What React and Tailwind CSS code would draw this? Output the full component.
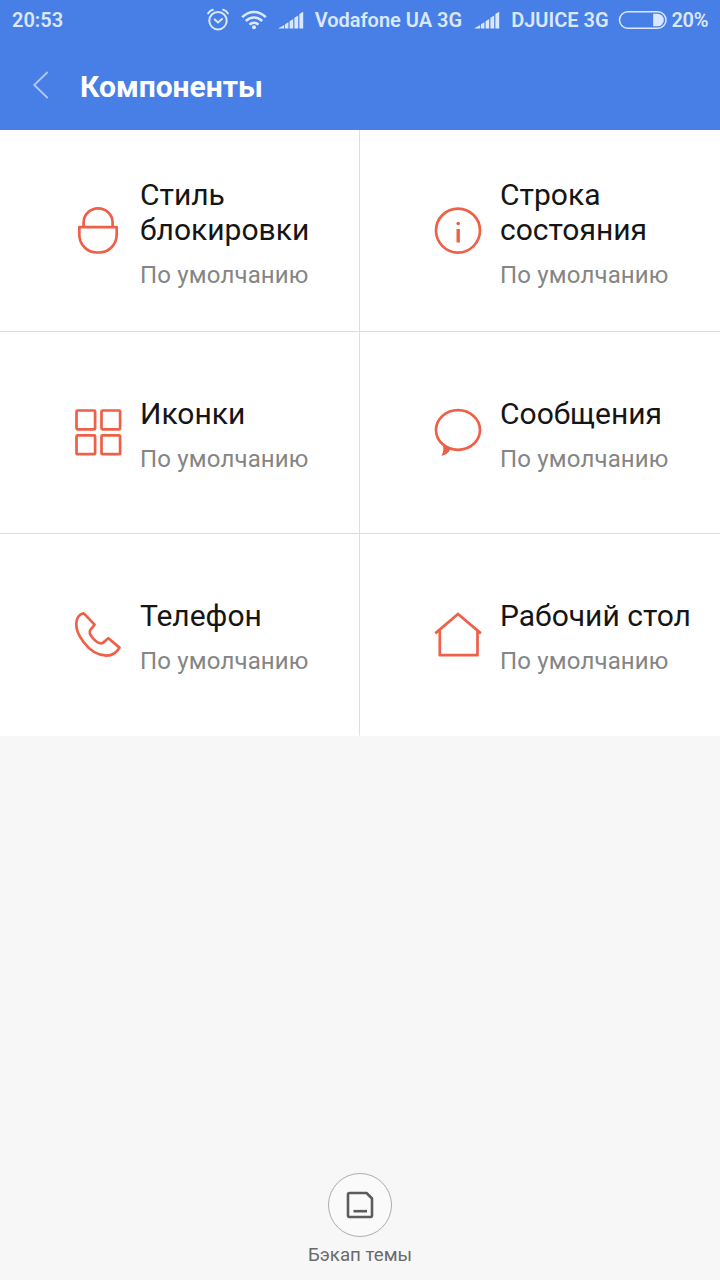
const components = [
  { id: 'lock', title: 'Стиль блокировки', icon: LockIcon },
  { id: 'status', title: 'Строка состояния', icon: InfoIcon },
  { id: 'icons', title: 'Иконки', icon: GridIcon },
  { id: 'messages', title: 'Сообщения', icon: ChatIcon },
  { id: 'phone', title: 'Телефон', icon: PhoneIcon },
  { id: 'desktop', title: 'Рабочий стол', icon: HomeIcon },
]

function IconBase({ children }) {
  return (
    <svg
      viewBox="0 0 60 60"
      className="w-15 h-15 shrink-0 text-[#ee6048]"
      fill="none"
      stroke="currentColor"
      strokeWidth="2.7"
      strokeLinejoin="round"
    >
      {children}
    </svg>
  )
}

function LockIcon() {
  return (
    <IconBase>
      <path d="M15.6 26V21.5a14.5 14.2 0 0 1 29 0V26" />
      <path d="M11.3 26.2H48.7V33.5a17.5 18 0 0 1-17.5 18h-2.4a17.5 18 0 0 1-17.5-18z" />
    </IconBase>
  )
}

function InfoIcon() {
  return (
    <IconBase>
      <circle cx="30" cy="29.6" r="22" />
      <path d="M30.2 28v13.5" strokeWidth="3.4" />
      <circle cx="30.2" cy="22.5" r="1.8" fill="currentColor" stroke="none" />
    </IconBase>
  )
}

function GridIcon() {
  return (
    <IconBase>
      <rect x="8.5" y="7.5" width="18.6" height="18.8" rx="1" />
      <rect x="33.5" y="7.5" width="18.6" height="18.8" rx="1" />
      <rect x="8.5" y="32.4" width="18.6" height="18.8" rx="1" />
      <rect x="33.5" y="32.4" width="18.6" height="18.8" rx="1" />
    </IconBase>
  )
}

function ChatIcon() {
  return (
    <IconBase>
      <ellipse cx="30" cy="27" rx="22" ry="19.8" />
      <path d="M14.3 40.5C16 44.5 15.8 48.5 13.4 52.8C17.5 52.2 20.8 50 22.3 46.2Z" fill="currentColor" stroke="none" />
    </IconBase>
  )
}

function PhoneIcon() {
  return (
    <IconBase>
      <path d="M15.8 8.4L26.6 19.6L22.3 25C20.6 27.5 22.5 30.5 25 33.4C28 36.5 31.5 39.6 34.5 38.1L40.4 33.2L51.5 42.6C49 47 45 50.6 38.5 50.6C30 50.5 21.5 45 15.5 37C10.5 30.5 7.8 24.5 8.3 18.2C8.6 13.8 11 9 15.8 8.4Z" />
    </IconBase>
  )
}

function HomeIcon() {
  return (
    <IconBase>
      <path d="M7.3 28.4L30 9L52.9 28.4" strokeLinejoin="miter" />
      <path d="M11.8 25.5V50.2H49.5V25.5" />
    </IconBase>
  )
}

function AlarmIcon() {
  return (
    <svg viewBox="0 0 22 24" className="w-[22px] h-6" fill="none" stroke="currentColor" strokeWidth="2" strokeLinecap="round">
      <circle cx="11" cy="12.7" r="8.7" />
      <path d="M7.7 11.5L11 14.5L15 11" />
      <path d="M1.2 5.3C2.2 3.5 3.7 2.3 5.8 1.8M20.8 5.3C19.8 3.5 18.3 2.3 16.2 1.8" />
    </svg>
  )
}

function WifiIcon() {
  return (
    <svg viewBox="0 0 26 20" className="w-[26px] h-5" fill="none" stroke="currentColor" strokeWidth="2.5">
      <path d="M1.2 7.2C8 0.2 18 0.2 24.8 7.2" />
      <path d="M4.8 11C9.6 6.2 16.4 6.2 21.2 11" />
      <path d="M8.5 14.6C11 12 15 12 17.5 14.6" />
      <circle cx="13" cy="17.2" r="2" fill="currentColor" stroke="none" />
    </svg>
  )
}

function SignalIcon() {
  return (
    <svg viewBox="0 0 26 18" className="w-[26px] h-[18px]" fill="currentColor">
      <path d="M0 17.5L6.2 14V17.5ZM7 13.2L10.4 11.2V17.5H7ZM11.6 10.2L15.2 8V17.5H11.6ZM16.4 6.8L20.2 4.4V17.5H16.4ZM21.4 3L25.2 0.8V17.5H21.4Z" />
    </svg>
  )
}

function BatteryIcon() {
  return (
    <svg viewBox="0 0 50 20" className="w-[50px] h-5">
      <rect x="1.5" y="1.8" width="46.5" height="16.4" rx="8.2" fill="none" stroke="currentColor" strokeWidth="1.5" />
      <path d="M35.2 3.7H39.5a6.3 6.3 0 0 1 0 12.6H35.2Z" fill="currentColor" />
    </svg>
  )
}

function StatusBar() {
  return (
    <div className="flex items-center h-10 pl-3 pr-3 text-xl font-semibold text-[#dbe8ff] whitespace-nowrap">
      <span>20:53</span>
      <div className="flex items-center ml-auto">
        <AlarmIcon />
        <span className="ml-3"><WifiIcon /></span>
        <span className="ml-[11px]"><SignalIcon /></span>
        <span className="ml-[11px]">Vodafone UA 3G</span>
        <span className="ml-3"><SignalIcon /></span>
        <span className="ml-[11px]">DJUICE 3G</span>
        <span className="ml-[9px]"><BatteryIcon /></span>
        <span className="ml-1 tracking-[-0.4px]">20%</span>
      </div>
    </div>
  )
}

function ComponentCell({ item, index }) {
  const Icon = item.icon
  return (
    <button
      className={`flex items-center pl-17 text-left border-b ${index % 2 === 0 ? 'border-r' : ''} ${index < 4 ? 'border-[#dedede]' : 'border-r-[#dedede] border-b-transparent'}`}
    >
      <Icon />
      <span className="ml-3 pt-1">
        <span className="block text-[30px] leading-[35px] text-[#151515]">{item.title}</span>
        <span className="block mt-3.5 text-2xl leading-7 tracking-[0.16px] text-[#858585]">По умолчанию</span>
      </span>
    </button>
  )
}

export default function App() {
  return (
    <div className="flex flex-col w-[720px] h-[1280px] bg-[#f7f7f7] font-['Roboto',sans-serif] overflow-hidden">
      <header className="h-[130px] bg-[#487fe7]">
        <StatusBar />
        <div className="flex items-center h-[90px] pl-8">
          <svg viewBox="0 0 18 30" className="w-[18px] h-[30px] text-[#b0c9f7]" fill="none" stroke="currentColor" strokeWidth="1.8">
            <path d="M15.7 2L2.2 15L15.7 28" />
          </svg>
          <h1 className="ml-[30px] pt-0.5 text-[30px] font-bold text-white">Компоненты</h1>
        </div>
      </header>

      <main className="grid grid-cols-2 grid-rows-[202px_202px_202px] bg-white">
        {components.map((item, index) => (
          <ComponentCell key={item.id} item={item} index={index} />
        ))}
      </main>

      {/* Backup action */}
      <button className="flex flex-col items-center mt-auto pb-[13px]">
        <span className="flex items-center justify-center w-16 h-16 rounded-full border border-[#adadad] bg-[#fafafa]">
          <svg viewBox="0 0 28 28" className="w-7 h-7 text-[#5c5c5c]" fill="none" stroke="currentColor" strokeWidth="2.6" strokeLinejoin="round">
            <path d="M3.5 2H20.5L26 7.5V24.5a1.5 1.5 0 0 1-1.5 1.5H3.5A1.5 1.5 0 0 1 2 24.5V3.5A1.5 1.5 0 0 1 3.5 2Z" />
            <path d="M7.5 20.2H21" />
          </svg>
        </span>
        <span className="mt-1.5 text-[18.7px] leading-6 text-[#6a6a6a]">Бэкап темы</span>
      </button>
    </div>
  )
}
